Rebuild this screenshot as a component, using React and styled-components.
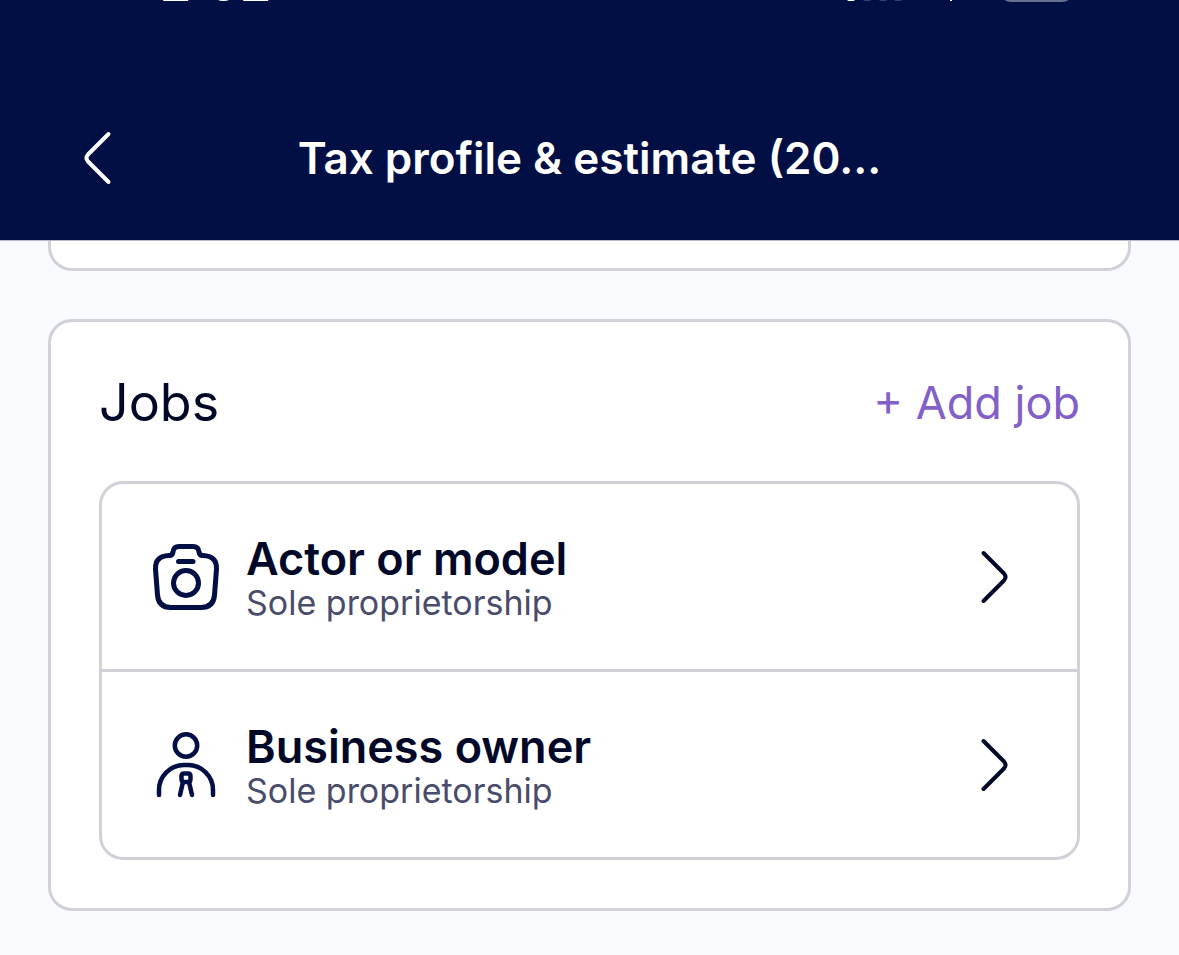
import React from 'react'
import styled, { createGlobalStyle } from 'styled-components'

const GlobalStyle = createGlobalStyle`
  * {
    box-sizing: border-box;
  }
  body {
    margin: 0;
    background-color: #f9faff;
    color: #020828;
    font-family: Inter, "Liberation Sans", sans-serif;
  }
  button {
    padding: 0;
    border: 0;
    background: none;
    color: inherit;
    font: inherit;
    cursor: pointer;
  }
`

const Header = styled.header`
  background-color: #020f45;
  color: white;
  border-bottom: 1px solid #b9bacb;
`

const StatusBar = styled.div`
  display: flex;
  justify-content: space-between;
  height: 76px;
  padding: 0 104px 0 160px;
  overflow: hidden;
`

const Clock = styled.div`
  height: 60px;
  margin-top: -48px;
  font-size: 50px;
  font-weight: 600;
  line-height: 60px;
`

const Colon = styled.span`
  vertical-align: 6px;
  line-height: 1;
`

const StatusIcons = styled.svg`
  width: 236px;
  height: 4px;
`

const NavBar = styled.div`
  display: grid;
  grid-template-columns: 96px 1fr 96px;
  align-items: center;
  height: 164px;
  padding: 0 48px;
`

const BackButton = styled.button`
  display: flex;
  justify-content: center;
`

const PageTitle = styled.h1`
  margin: 0;
  font-size: 44px;
  font-weight: 600;
  line-height: 56px;
  text-align: center;
  white-space: nowrap;
`

const Page = styled.main`
  display: flex;
  flex-direction: column;
  gap: 48px;
  padding: 0 48px 44px;
`

const Card = styled.section`
  padding: 48px;
  background-color: white;
  border: 3px solid #d0d1d9;
  border-radius: 24px;
`

const PreviousCard = styled(Card)`
  height: 30px;
  padding: 0;
  border-top: 0;
  border-radius: 0 0 24px 24px;
`

const CardHeader = styled.div`
  display: flex;
  align-items: center;
  justify-content: space-between;
  margin-bottom: 45px;
`

const CardTitle = styled.h2`
  margin: 0;
  font-size: 52px;
  font-weight: 400;
  line-height: 66px;
`

const AddButton = styled.button`
  color: #835fc9;
  font-size: 45px;
  line-height: 56px;
`

const JobList = styled.ul`
  margin: 0;
  padding: 0;
  list-style: none;
  border: 3px solid #d0d1d9;
  border-radius: 24px;
`

const JobItem = styled.li`
  & + & {
    border-top: 3px solid #d0d1d9;
  }
`

const JobButton = styled.button`
  display: flex;
  align-items: center;
  gap: 24px;
  width: 100%;
  height: 185px;
  padding: 0 48px;
  text-align: left;
`

const JobText = styled.span`
  display: flex;
  flex: 1;
  flex-direction: column;
`

const JobName = styled.span`
  font-size: 45px;
  font-weight: 600;
  line-height: 52px;
`

const JobType = styled.span`
  color: #4a4c6b;
  font-size: 34px;
  line-height: 36px;
`

const Icon = styled.svg`
  flex: none;
  width: 72px;
  height: 72px;
  fill: none;
  stroke: ${(props) => props.$color || 'currentColor'};
  stroke-width: ${(props) => props.$weight || 4};
  stroke-linecap: round;
  stroke-linejoin: round;
`

function ChevronLeft() {
  return (
    <Icon viewBox="0 0 72 72" aria-hidden="true">
      <path d="M48.5 12 L28 32.5 Q25 36 28 39.5 L48.5 60" />
    </Icon>
  )
}

function ChevronRight() {
  return (
    <Icon viewBox="0 0 72 72" aria-hidden="true">
      <path d="M26.5 12 L47 32.5 Q50 36 47 39.5 L26.5 60" />
    </Icon>
  )
}

function CameraIcon() {
  return (
    <Icon viewBox="0 0 72 72" $color="#020f45" $weight={5} aria-hidden="true">
      <path d="M20 14.5 Q22.5 14 23 11 Q23.5 5.5 29 5.5 H43 Q48.5 5.5 49 11 Q49.5 14 52 14.5 H53 Q67 15 66.5 28 L64.5 54 Q63.5 66.5 51 66.5 H21 Q8.5 66.5 7.5 54 L5.5 28 Q5 15 19 14.500 Z" />
      <path d="M28.5 20.5 H43" />
      <circle cx="36" cy="42" r="12.5" />
    </Icon>
  )
}

function OwnerIcon() {
  return (
    <Icon viewBox="0 0 72 72" $color="#020f45" $weight={4.5} aria-hidden="true">
      <circle cx="36" cy="16.5" r="11.2" />
      <path d="M9 66 V61 A25 25 0 0 1 34 36 H38 A25 25 0 0 1 63 61 V66" />
      <path d="M34 44.5 H38 Q40.5 44.5 40.5 47 V50 Q40.5 53 38 53 H34 Q31.5 53 31.5 50 V47 Q31.5 44.5 34 44.5 Z" />
      <path d="M33 53 L30 66 M39 53 L42 66" />
    </Icon>
  )
}

const jobs = [
  { id: 'actor', name: 'Actor or model', type: 'Sole proprietorship', icon: CameraIcon },
  { id: 'owner', name: 'Business owner', type: 'Sole proprietorship', icon: OwnerIcon },
]

function Job(props) {
  const { job } = props
  const JobIcon = job.icon

  return (
    <JobItem>
      <JobButton type="button">
        <JobIcon />
        <JobText>
          <JobName>{job.name}</JobName>
          <JobType>{job.type}</JobType>
        </JobText>
        <ChevronRight />
      </JobButton>
    </JobItem>
  )
}

function App() {
  return (
    <>
      <GlobalStyle />
      <Header>
        <StatusBar>
          <Clock>2<Colon>:</Colon>02</Clock>
          <StatusIcons viewBox="0 0 236 4" aria-hidden="true">
            <rect x="8" y="-6" width="8" height="7" rx="2" fill="#fff" />
            <rect x="24" y="-6" width="8" height="7" rx="2" fill="#37416c" />
            <rect x="40" y="-6" width="8" height="7" rx="2" fill="#37416c" />
            <rect x="55" y="-6" width="8" height="7" rx="2" fill="#37416c" />
            <rect x="111" y="-3" width="2" height="4" fill="#fff" />
            <rect x="160" y="-36" width="75" height="38" rx="12" fill="#68708f" />
          </StatusIcons>
        </StatusBar>
        <NavBar>
          <BackButton type="button" aria-label="Back">
            <ChevronLeft />
          </BackButton>
          <PageTitle>Tax profile &amp; estimate (20...</PageTitle>
        </NavBar>
      </Header>
      <Page>
        <PreviousCard as="div" />
        <Card>
          <CardHeader>
            <CardTitle>Jobs</CardTitle>
            <AddButton type="button">+ Add job</AddButton>
          </CardHeader>
          <JobList>
            {jobs.map((job) => (
              <Job key={job.id} job={job} />
            ))}
          </JobList>
        </Card>
      </Page>
    </>
  )
}

export default App
